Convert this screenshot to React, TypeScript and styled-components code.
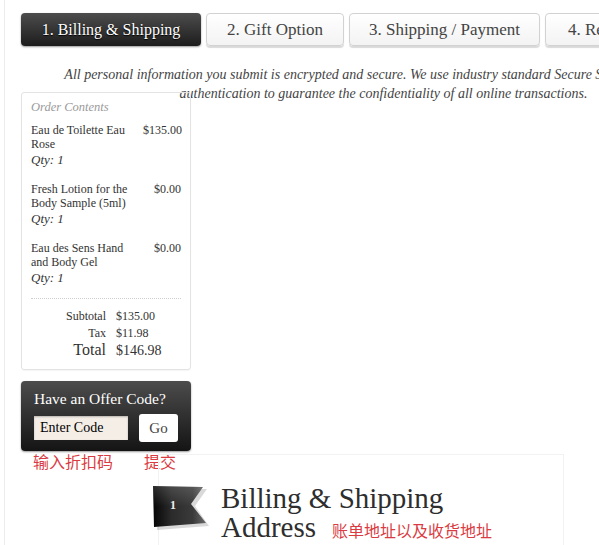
import React from "react";
import styled, { createGlobalStyle, css } from "styled-components";

const Global = createGlobalStyle`
  html, body { overflow: hidden; }
  body {
    margin: 0;
    background: #fff;
    font-family: "Liberation Serif", "Noto Sans CJK SC", serif;
    color: #333;
  }
`;

const Frame = styled.div`
  margin-left: 4px;
  border-left: 1px solid #ececec;
  min-height: 100vh;
`;

const Page = styled.div`
  padding: 13px 0 0 16px;
  width: 760px;
`;

const Tabs = styled.div`
  display: flex;
  gap: 5px;
`;

const Tab = styled.div<{ $active?: boolean; $w?: number }>`
  flex: none;
  width: ${(p) => (p.$w ? `${p.$w}px` : "auto")};
  height: 33px;
  box-sizing: border-box;
  border-radius: 4px;
  display: flex;
  align-items: center;
  justify-content: center;
  padding: 0 22px;
  font-size: 17px;
  white-space: nowrap;
  ${(p) =>
    p.$active
      ? css`
          font-size: 16px;
          background: linear-gradient(#4d4d4d, #1c1c1c);
          color: #fff;
          text-shadow: 0 1px 1px #000;
          box-shadow: 0 1px 2px rgba(0, 0, 0, 0.4);
        `
      : css`
          background: linear-gradient(#ffffff, #f3f3f3);
          border: 1px solid #d2d2d2;
          color: #444;
          box-shadow: 0 2px 1px rgba(0, 0, 0, 0.15);
        `}
`;

const Intro = styled.p`
  margin: 19px 0 -11px;
  width: 725px;
  text-align: center;
  font-style: italic;
  font-size: 14px;
  line-height: 19px;
  color: #444;
`;

const Sidebar = styled.div`
  width: 170px;
  display: flex;
  flex-direction: column;
  gap: 11px;
`;

const OrderBox = styled.div`
  box-sizing: border-box;
  height: 278px;
  border: 1px solid #e3e3e3;
  border-radius: 3px;
  padding: 6px 9px 0 9px;
  box-shadow: 0 1px 1px rgba(0, 0, 0, 0.04);
`;

const BoxTitle = styled.div`
  font-style: italic;
  font-size: 12.5px;
  color: #9a9a9a;
  line-height: 16px;
  margin-bottom: 8px;
`;

const Item = styled.div`
  display: flex;
  justify-content: space-between;
  align-items: flex-start;
  margin-bottom: 14px;
`;

const ItemName = styled.div`
  width: 112px;
  font-size: 12px;
  line-height: 14px;
  color: #333;
`;

const Qty = styled.div`
  font-style: italic;
  font-size: 13px;
  line-height: 17px;
  color: #333;
`;

const Price = styled.div`
  font-size: 12px;
  line-height: 14px;
  color: #333;
`;

const Divider = styled.div`
  border-top: 1px dotted #cfcfcf;
  margin: -2px 0 9px;
`;

const Totals = styled.div`
  display: grid;
  grid-template-columns: 75px auto;
  column-gap: 10px;
  align-items: baseline;
`;

const TotalLabel = styled.div<{ $big?: boolean }>`
  text-align: right;
  font-size: ${(p) => (p.$big ? 16 : 12)}px;
  line-height: ${(p) => (p.$big ? 16 : 17)}px;
  color: #333;
`;

const TotalValue = styled.div<{ $big?: boolean }>`
  font-size: ${(p) => (p.$big ? 14 : 12)}px;
  line-height: ${(p) => (p.$big ? 16 : 17)}px;
  color: #333;
`;

const OfferBox = styled.div`
  position: relative;
  height: 70px;
  box-sizing: border-box;
  border-radius: 4px;
  background: linear-gradient(#4c4c4c, #141414);
  box-shadow: 0 1px 2px rgba(0, 0, 0, 0.4);
  padding: 9px 13px 0 13px;
`;

const OfferTitle = styled.div`
  color: #fff;
  font-size: 15.5px;
  line-height: 18px;
`;

const OfferRow = styled.div`
  display: flex;
  align-items: center;
  gap: 11px;
  margin-top: 6px;
`;

const CodeInput = styled.input`
  width: 94px;
  height: 24px;
  box-sizing: border-box;
  border: none;
  background: #f4eee7;
  box-shadow: inset 0 1px 2px rgba(0, 0, 0, 0.25);
  padding: 0 6px;
  font-family: "Liberation Serif", serif;
  font-size: 14px;
  color: #000;
  outline: none;
  &::placeholder { color: #000; opacity: 1; }
`;

const GoButton = styled.button`
  width: 40px;
  height: 28px;
  border: none;
  border-radius: 3px;
  background: #fff;
  font-family: "Liberation Serif", serif;
  font-size: 15px;
  color: #444;
  padding: 0;
`;

const Notes = styled.div`
  position: absolute;
  left: 12px;
  top: 100%;
  margin-top: -1px;
  display: flex;
  gap: 31px;
`;

const Note = styled.span`
  color: #da3b42;
  font-family: "Noto Sans CJK SC", sans-serif;
  font-size: 16px;
  line-height: 22px;
`;

const MainBox = styled.div`
  position: relative;
  margin: 3px 0 0 137px;
  width: 406px;
  height: 200px;
  box-sizing: border-box;
  border: 1px solid #f2f2f2;
  padding: 29px 0 0 62px;
`;

const Ribbon = styled.div`
  position: absolute;
  left: -6px;
  top: 31px;
  width: 56px;
  height: 45px;
`;

const RibbonNum = styled.span`
  position: absolute;
  left: 13px;
  top: 12px;
  width: 14px;
  text-align: center;
  color: #eee;
  font-size: 12px;
  font-weight: bold;
`;

const Heading = styled.h2`
  margin: 0;
  font-weight: normal;
  font-size: 29px;
  line-height: 29px;
  color: #2e2e2e;
`;

const HeadNote = styled(Note)`
  margin-left: 16px;
  font-size: 16px;
`;

const items = [
  { name: "Eau de Toilette Eau Rose", price: "$135.00" },
  { name: "Fresh Lotion for the Body Sample (5ml)", price: "$0.00" },
  { name: "Eau des Sens Hand and Body Gel", price: "$0.00" },
];

export default function App() {
  return (
    <>
      <Global />
      <Frame>
        <Page>
          <Tabs>
            <Tab $active $w={180}>1. Billing &amp; Shipping</Tab>
            <Tab $w={138}>2. Gift Option</Tab>
            <Tab $w={191}>3. Shipping / Payment</Tab>
            <Tab>4. Review</Tab>
          </Tabs>
          <Intro>
            All personal information you submit is encrypted and secure. We use industry standard Secure Socket Layer (SSL)
            <br />
            authentication to guarantee the confidentiality of all online transactions.
          </Intro>
          <Sidebar>
            <OrderBox>
              <BoxTitle>Order Contents</BoxTitle>
              {items.map((it) => (
                <Item key={it.name}>
                  <div>
                    <ItemName>{it.name}</ItemName>
                    <Qty>Qty: 1</Qty>
                  </div>
                  <Price>{it.price}</Price>
                </Item>
              ))}
              <Divider />
              <Totals>
                <TotalLabel>Subtotal</TotalLabel>
                <TotalValue>$135.00</TotalValue>
                <TotalLabel>Tax</TotalLabel>
                <TotalValue>$11.98</TotalValue>
                <TotalLabel $big>Total</TotalLabel>
                <TotalValue $big>$146.98</TotalValue>
              </Totals>
            </OrderBox>
            <OfferBox>
              <OfferTitle>Have an Offer Code?</OfferTitle>
              <OfferRow>
                <CodeInput placeholder="Enter Code" />
                <GoButton>Go</GoButton>
              </OfferRow>
              <Notes>
                <Note>输入折扣码</Note>
                <Note>提交</Note>
              </Notes>
            </OfferBox>
          </Sidebar>
          <MainBox>
            <Ribbon>
              <svg width="56" height="45" viewBox="0 0 56 45">
                <defs>
                  <linearGradient id="rg" x1="0" y1="0" x2="1" y2="0">
                    <stop offset="0" stopColor="#050505" />
                    <stop offset="0.35" stopColor="#2b2b2b" />
                    <stop offset="0.75" stopColor="#3a3a3a" />
                    <stop offset="1" stopColor="#6a6a6a" />
                  </linearGradient>
                  <linearGradient id="rs" x1="0" y1="0" x2="0" y2="1">
                    <stop offset="0" stopColor="#ffffff" stopOpacity="0.15" />
                    <stop offset="0.5" stopColor="#ffffff" stopOpacity="0" />
                  </linearGradient>
                </defs>
                <polygon points="3,3 54,3 42,20 56,40 4,44" fill="rgba(0,0,0,0.15)" />
                <polygon points="0,0 50,1 38,18 53,37 1,41" fill="url(#rg)" />
                <polygon points="0,0 50,1 38,18 53,37 1,41" fill="url(#rs)" />
              </svg>
              <RibbonNum>1</RibbonNum>
            </Ribbon>
            <Heading>
              Billing &amp; Shipping
              <br />
              Address<HeadNote>账单地址以及收货地址</HeadNote>
            </Heading>
          </MainBox>
        </Page>
      </Frame>
    </>
  );
}
